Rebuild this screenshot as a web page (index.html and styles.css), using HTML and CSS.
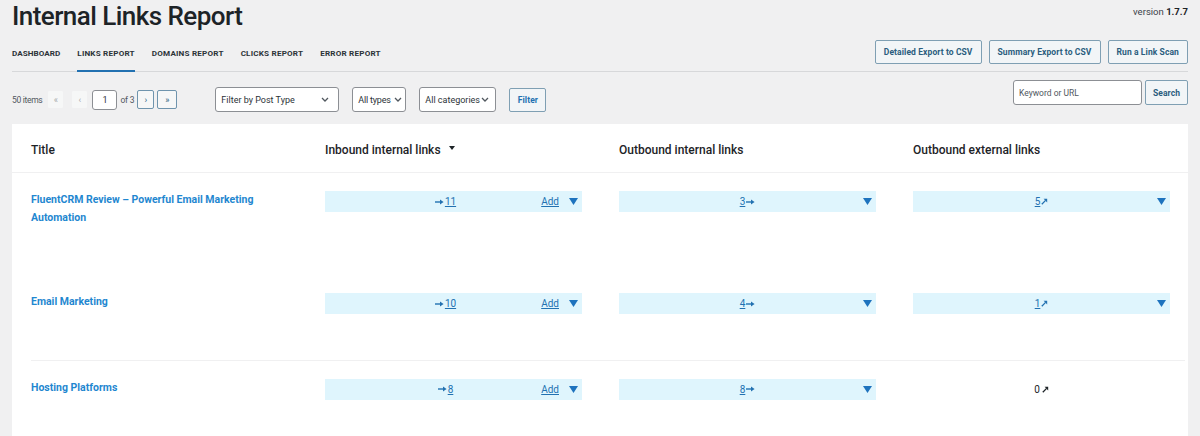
FILE: index.html
```html
<!DOCTYPE html>
<html lang="en">
<head>
<meta charset="utf-8">
<title>Internal Links Report</title>
<link rel="stylesheet" href="styles.css">
</head>
<body>
<div class="page">
  <header class="top">
    <h1 class="title">Internal Links Report</h1>
    <div class="version">version <b>1.7.7</b></div>
  </header>

  <div class="nav">
    <div class="tabs">
      <a class="tab">Dashboard</a>
      <a class="tab active">Links Report</a>
      <a class="tab">Domains Report</a>
      <a class="tab">Clicks Report</a>
      <a class="tab">Error Report</a>
    </div>
    <div class="actions">
      <span class="btn">Detailed Export to CSV</span>
      <span class="btn">Summary Export to CSV</span>
      <span class="btn">Run a Link Scan</span>
    </div>
  </div>

  <div class="toolbar">
    <div class="toolbar-left">
      <div class="pager">
        <span class="count">50 items</span>
        <span class="pg pg-off">«</span>
        <span class="pg pg-off">‹</span>
        <span class="pg-input">1</span>
        <span class="of">of 3</span>
        <span class="pg pg-on">›</span>
        <span class="pg pg-on pg-wide">»</span>
      </div>
      <div class="filters">
        <span class="select sel-post">Filter by Post Type<svg class="chev" viewBox="0 0 8 5" width="8" height="5"><path d="M1 1l3 3 3-3" fill="none" stroke="#50575e" stroke-width="1.3"/></svg></span>
        <span class="select sel-types">All types<svg class="chev" viewBox="0 0 8 5" width="8" height="5"><path d="M1 1l3 3 3-3" fill="none" stroke="#50575e" stroke-width="1.3"/></svg></span>
        <span class="select sel-cats">All categories<svg class="chev" viewBox="0 0 8 5" width="8" height="5"><path d="M1 1l3 3 3-3" fill="none" stroke="#50575e" stroke-width="1.3"/></svg></span>
        <span class="btn btn-filter">Filter</span>
      </div>
    </div>
    <div class="search">
      <span class="search-input">Keyword or URL</span>
      <span class="btn btn-search">Search</span>
    </div>
  </div>

  <div class="card">
    <div class="grid thead">
      <div class="th">Title</div>
      <div class="th">Inbound internal links <svg class="sort" viewBox="0 0 6 4" width="6" height="4"><path d="M0 0h6L3 4z" fill="#1d2327"/></svg></div>
      <div class="th">Outbound internal links</div>
      <div class="th">Outbound external links</div>
    </div>

    <div class="grid row">
      <div class="cell-title"><a class="post">FluentCRM Review – Powerful Email Marketing Automation</a></div>
      <div class="bar">
        <span class="num num-in"><svg class="arr" viewBox="0 0 9 6" width="9" height="6"><path d="M0 3h6" stroke="currentColor" stroke-width="1.4"/><path d="M5 0.5L8.6 3 5 5.5z" fill="currentColor"/></svg><u>11</u></span>
        <span class="bar-actions"><u class="add">Add</u><svg class="tri" viewBox="0 0 9 7" width="9" height="7"><path d="M0 0h9L4.5 7z" fill="#1e73be"/></svg></span>
      </div>
      <div class="bar">
        <span class="num"><u>3</u><svg class="arr" viewBox="0 0 9 6" width="9" height="6"><path d="M0 3h6" stroke="currentColor" stroke-width="1.4"/><path d="M5 0.5L8.6 3 5 5.5z" fill="currentColor"/></svg></span>
        <span class="bar-actions"><svg class="tri" viewBox="0 0 9 7" width="9" height="7"><path d="M0 0h9L4.5 7z" fill="#1e73be"/></svg></span>
      </div>
      <div class="bar">
        <span class="num"><u>5</u><svg class="ext" viewBox="0 0 7 7" width="7" height="7"><path d="M0.8 6.2L4.6 2.4" stroke="currentColor" stroke-width="1.3"/><path d="M2.6 0.8H6.2V4.4z" fill="currentColor"/></svg></span>
        <span class="bar-actions"><svg class="tri" viewBox="0 0 9 7" width="9" height="7"><path d="M0 0h9L4.5 7z" fill="#1e73be"/></svg></span>
      </div>
    </div>

    <div class="grid row">
      <div class="cell-title"><a class="post">Email Marketing</a></div>
      <div class="bar">
        <span class="num num-in"><svg class="arr" viewBox="0 0 9 6" width="9" height="6"><path d="M0 3h6" stroke="currentColor" stroke-width="1.4"/><path d="M5 0.5L8.6 3 5 5.5z" fill="currentColor"/></svg><u>10</u></span>
        <span class="bar-actions"><u class="add">Add</u><svg class="tri" viewBox="0 0 9 7" width="9" height="7"><path d="M0 0h9L4.5 7z" fill="#1e73be"/></svg></span>
      </div>
      <div class="bar">
        <span class="num"><u>4</u><svg class="arr" viewBox="0 0 9 6" width="9" height="6"><path d="M0 3h6" stroke="currentColor" stroke-width="1.4"/><path d="M5 0.5L8.6 3 5 5.5z" fill="currentColor"/></svg></span>
        <span class="bar-actions"><svg class="tri" viewBox="0 0 9 7" width="9" height="7"><path d="M0 0h9L4.5 7z" fill="#1e73be"/></svg></span>
      </div>
      <div class="bar">
        <span class="num"><u>1</u><svg class="ext" viewBox="0 0 7 7" width="7" height="7"><path d="M0.8 6.2L4.6 2.4" stroke="currentColor" stroke-width="1.3"/><path d="M2.6 0.8H6.2V4.4z" fill="currentColor"/></svg></span>
        <span class="bar-actions"><svg class="tri" viewBox="0 0 9 7" width="9" height="7"><path d="M0 0h9L4.5 7z" fill="#1e73be"/></svg></span>
      </div>
    </div>

    <div class="grid row row-sep">
      <div class="cell-title"><a class="post">Hosting Platforms</a></div>
      <div class="bar">
        <span class="num num-in"><svg class="arr" viewBox="0 0 9 6" width="9" height="6"><path d="M0 3h6" stroke="currentColor" stroke-width="1.4"/><path d="M5 0.5L8.6 3 5 5.5z" fill="currentColor"/></svg><u>8</u></span>
        <span class="bar-actions"><u class="add">Add</u><svg class="tri" viewBox="0 0 9 7" width="9" height="7"><path d="M0 0h9L4.5 7z" fill="#1e73be"/></svg></span>
      </div>
      <div class="bar">
        <span class="num"><u>8</u><svg class="arr" viewBox="0 0 9 6" width="9" height="6"><path d="M0 3h6" stroke="currentColor" stroke-width="1.4"/><path d="M5 0.5L8.6 3 5 5.5z" fill="currentColor"/></svg></span>
        <span class="bar-actions"><svg class="tri" viewBox="0 0 9 7" width="9" height="7"><path d="M0 0h9L4.5 7z" fill="#1e73be"/></svg></span>
      </div>
      <div class="bar bar-plain">
        <span class="num num-zero">0<svg class="ext" viewBox="0 0 7 7" width="7" height="7"><path d="M0.8 6.2L4.6 2.4" stroke="currentColor" stroke-width="1.3"/><path d="M2.6 0.8H6.2V4.4z" fill="currentColor"/></svg></span>
      </div>
    </div>
  </div>
</div>
</body>
</html>
```

FILE: styles.css
```css
* { box-sizing: border-box; }

html, body {
  margin: 0;
  padding: 0;
  background: #f0f0f1;
  font-family: Roboto, "Liberation Sans", Arial, sans-serif;
  color: #1d2327;
}

.page {
  padding: 0 12px;
}

/* ---------- header ---------- */
.top {
  display: flex;
  justify-content: space-between;
  align-items: flex-start;
}

.title {
  margin: 0;
  font-size: 26px;
  line-height: 32px;
  font-weight: 500;
  letter-spacing: -0.55px;
  color: #1d2327;
}

.version {
  margin-top: 5px;
  font-size: 9.5px;
  line-height: 14px;
  color: #3c434a;
}
.version b { font-weight: 700; color: #1d2327; }

/* ---------- nav ---------- */
.nav {
  display: flex;
  justify-content: space-between;
  align-items: flex-end;
  padding-top: 8px;
  border-bottom: 1px solid #d7d8da;
}

.tabs {
  display: flex;
  gap: 17px;
}

.tab {
  display: block;
  font-size: 8.1px;
  line-height: 12px;
  font-weight: 700;
  letter-spacing: 0.2px;
  text-transform: uppercase;
  color: #2c3338;
  padding: 0 0 11px;
  border-bottom: 2px solid transparent;
  margin-bottom: -1px;
}
.tab:first-child { letter-spacing: 0.05px; }
.tab.active {
  border-bottom-color: #2271b1;
}

.actions {
  display: flex;
  gap: 7px;
  margin-bottom: 7px;
}

.btn {
  display: inline-flex;
  align-items: center;
  justify-content: center;
  height: 24px;
  padding: 0 8px;
  border: 1px solid #7f9fb3;
  border-radius: 2px;
  background: #f2f5f7;
  color: #2b5d7e;
  font-size: 8.5px;
  font-weight: 700;
  letter-spacing: 0.1px;
  white-space: nowrap;
}

/* ---------- toolbar ---------- */
.toolbar {
  display: flex;
  justify-content: space-between;
  align-items: flex-start;
  margin-top: 8px;
}

.toolbar-left {
  display: flex;
  align-items: center;
  gap: 38px;
  margin-top: 7px;
}

.pager {
  display: flex;
  align-items: center;
  gap: 4px;
  font-size: 8.5px;
  color: #50575e;
}
.count { margin-right: 1px; letter-spacing: -0.3px; }

.pg {
  display: inline-flex;
  align-items: center;
  justify-content: center;
  width: 17px;
  height: 19px;
  border-radius: 2px;
  font-size: 9px;
}
.pg-off {
  background: #f6f7f7;
  color: #a7aaad;
  border: 1px solid #f0f0f1;
}
.pg-off + .pg-off { margin-left: 3px; }
.pg-on {
  background: #f6f7f7;
  color: #2b5d7e;
  border: 1px solid #6f94ad;
}
.pg-wide { width: 20px; margin-left: -1px; }

.pg-input {
  display: inline-flex;
  align-items: center;
  justify-content: center;
  width: 25px;
  height: 20px;
  background: #fff;
  border: 1px solid #8c8f94;
  border-radius: 3px;
  color: #2c3338;
  font-size: 9px;
}
.of { margin: 0 -1px; letter-spacing: -0.2px; }

.filters {
  display: flex;
  align-items: center;
  gap: 13px;
}

.select {
  display: inline-flex;
  align-items: center;
  justify-content: space-between;
  height: 25px;
  padding: 0 6px 0 5px;
  background: #fff;
  border: 1px solid #8c8f94;
  border-radius: 3px;
  font-size: 9px;
  color: #2c3338;
  white-space: nowrap;
}
.chev { flex: none; }
.sel-post { width: 124px; padding-right: 9px; }
.sel-types { width: 54px; padding-right: 3px; letter-spacing: -0.2px; }
.sel-cats { width: 77px; }

.btn-filter {
  height: 24px;
  width: 37px;
  padding: 0;
  color: #2271b1;
}

.search {
  display: flex;
  gap: 3px;
}
.search-input {
  display: inline-flex;
  align-items: center;
  width: 129px;
  height: 25px;
  padding: 0 5px;
  background: #fff;
  border: 1px solid #8c8f94;
  border-radius: 3px;
  font-size: 8.5px;
  color: #50575e;
}
.btn-search {
  height: 25px;
  width: 43px;
  padding: 0;
}

/* ---------- card / table ---------- */
.card {
  margin-top: 12px;
  background: #fff;
  min-height: 330px;
}

.grid {
  display: grid;
  grid-template-columns: 294px 294px 294px 1fr;
  padding-left: 19px;
  padding-right: 18px;
}

.thead {
  height: 49px;
  padding-top: 3px;
  align-items: center;
  border-bottom: 1px solid #f0f0f1;
}

.th {
  font-size: 12px;
  font-weight: 500;
  color: #1d2327;
  display: flex;
  align-items: center;
}
.sort { margin-left: 8px; margin-top: -3px; }

.row {
  padding-top: 18px;
  align-items: start;
}
.row-sep {
  margin-left: 19px;
  margin-right: 3px;
  padding-left: 0;
  padding-right: 15px;
  border-top: 1px solid #f0f0f1;
}

.cell-title {
  font-size: 10.5px;
  line-height: 17.5px;
  padding-bottom: 49px;
  padding-right: 40px;
}
.post {
  font-weight: 700;
  color: #1f87d0;
  text-decoration: none;
}

.bar {
  display: grid;
  grid-template-areas: "stack";
  align-items: center;
  width: 257px;
  height: 21px;
  background: #dff5fd;
  color: #2271b1;
  font-size: 10px;
}
.bar > * { grid-area: stack; }

.num {
  justify-self: center;
  display: inline-flex;
  align-items: center;
  gap: 1px;
}
.num u { text-underline-offset: 1px; }
.num-in { margin-right: 16px; }

.bar-actions {
  justify-self: end;
  display: inline-flex;
  align-items: center;
  gap: 10px;
  padding-right: 4px;
}
.add { font-size: 10px; }
.tri { display: block; }

.bar-plain {
  background: transparent;
}
.num-zero {
  color: #1d2327;
  gap: 2px;
}
```
